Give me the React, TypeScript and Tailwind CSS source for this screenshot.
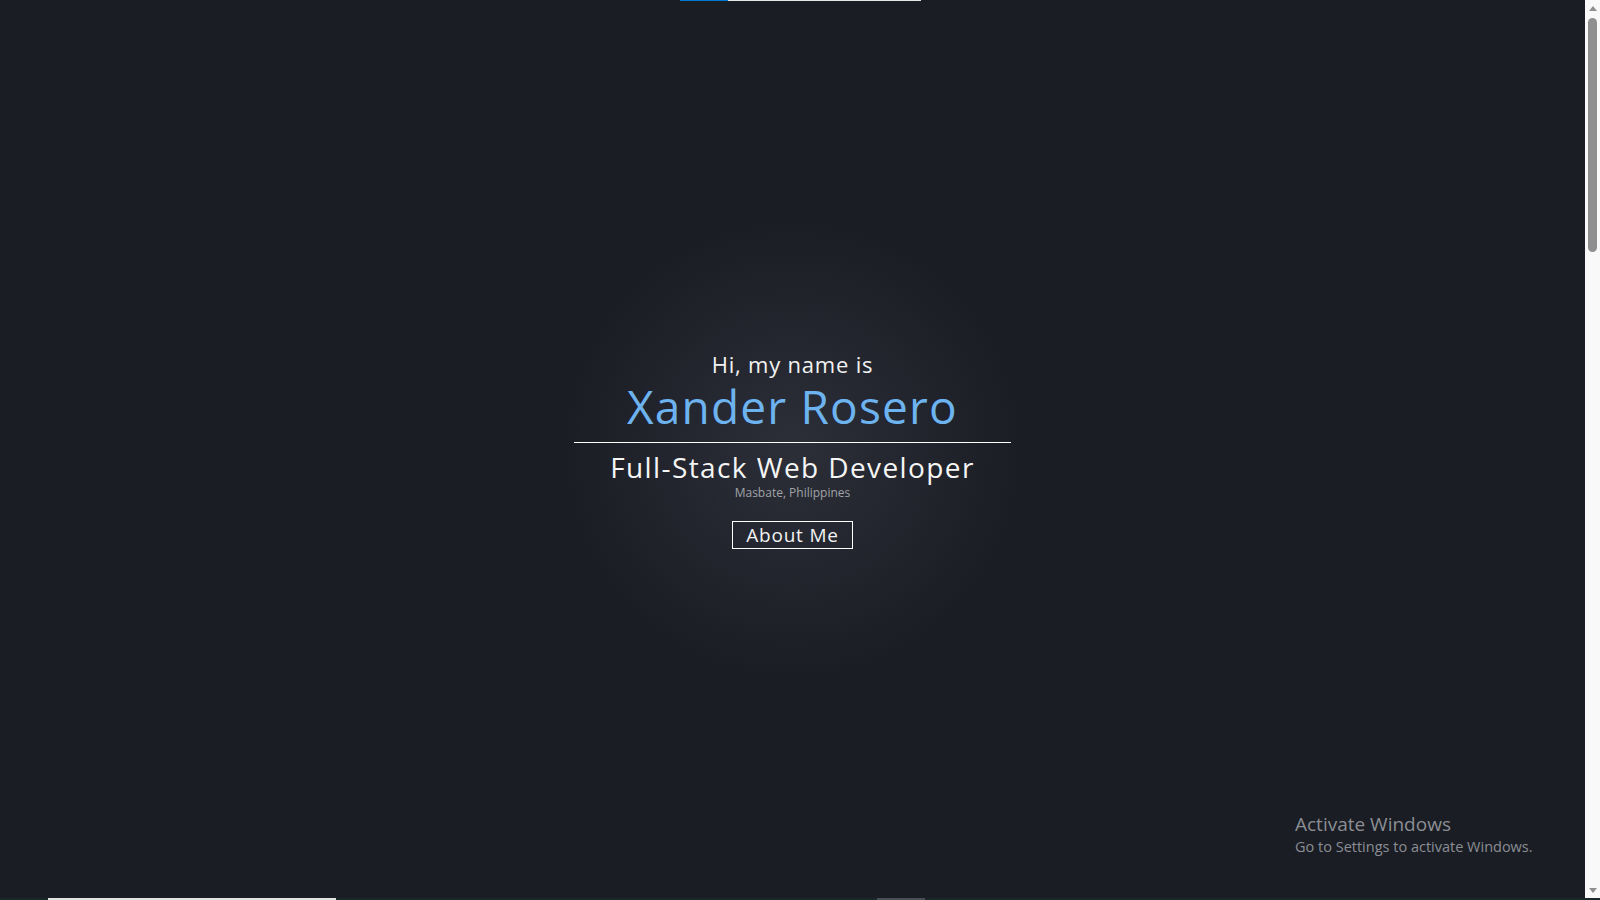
export default function App() {
  return (
    <div className="relative flex h-[900px] w-[1600px] flex-col overflow-hidden bg-[#1a1d24] font-['Open_Sans',sans-serif]">
      {/* top loading strip */}
      <div className="absolute left-0 top-0 flex h-px w-[1585px]">
        <div className="ml-[680px] w-[48px] bg-[#0078d4]" />
        <div className="w-[193px] bg-[#e6e6e6]" />
      </div>

      <div className="flex h-[898px] w-full">
        <main className="flex h-full w-[1585px] items-center justify-center pt-[2px] bg-[radial-gradient(circle_230px_at_50%_50%,#2c2f37_0%,#23262e_50%,#1a1d24_100%)]">
          <div className="flex flex-col items-center text-center">
            <p className="text-[22px] leading-[26px] tracking-[0.8px] text-[#f2f2f2]">Hi, my name is</p>
            <h1 className="mt-[2px] text-[46px] leading-[54px] tracking-[1.2px] text-[#6db3ef]">Xander Rosero</h1>
            <hr className="mt-[9px] w-[437px] border-t border-white" />
            <h2 className="mt-[7px] text-[28px] leading-[34px] tracking-[1.4px] text-[#f5f5f5]">Full-Stack Web Developer</h2>
            <p className="mt-[2px] text-[12px] leading-[14px] text-[#a0a3a8]">Masbate, Philippines</p>
            <button className="mt-[21px] h-[28px] w-[121px] border border-white text-[19px] leading-[26px] tracking-[0.8px] text-[#f2f2f2]">
              About Me
            </button>
          </div>
        </main>

        {/* scrollbar */}
        <div className="flex w-[15px] flex-col items-center bg-[#f9f9f9]">
          <div className="mt-[6px] h-0 w-0 border-x-[4px] border-b-[5px] border-x-transparent border-b-[#8f8f8f]" />
          <div className="mt-[7px] h-[234px] w-[9px] rounded-full bg-[#8f8f8f]" />
          <div className="mt-auto mb-[5px] h-0 w-0 border-x-[4px] border-t-[5px] border-x-transparent border-t-[#8f8f8f]" />
        </div>
      </div>

      {/* bottom strip */}
      <div className="flex h-[2px] w-full bg-[#1c2729]">
        <div className="ml-[48px] w-[288px] bg-[#e4e4e4]" />
        <div className="ml-[541px] w-[48px] bg-[#4a4f55]" />
      </div>

      {/* windows watermark */}
      <div className="absolute left-[1295px] top-[812px] font-['Open_Sans',sans-serif] text-[#8b8e94]">
        <p className="text-[19px] leading-[25px]">Activate Windows</p>
        <p className="text-[14.5px] leading-[20px]">Go to Settings to activate Windows.</p>
      </div>
    </div>
  );
}
